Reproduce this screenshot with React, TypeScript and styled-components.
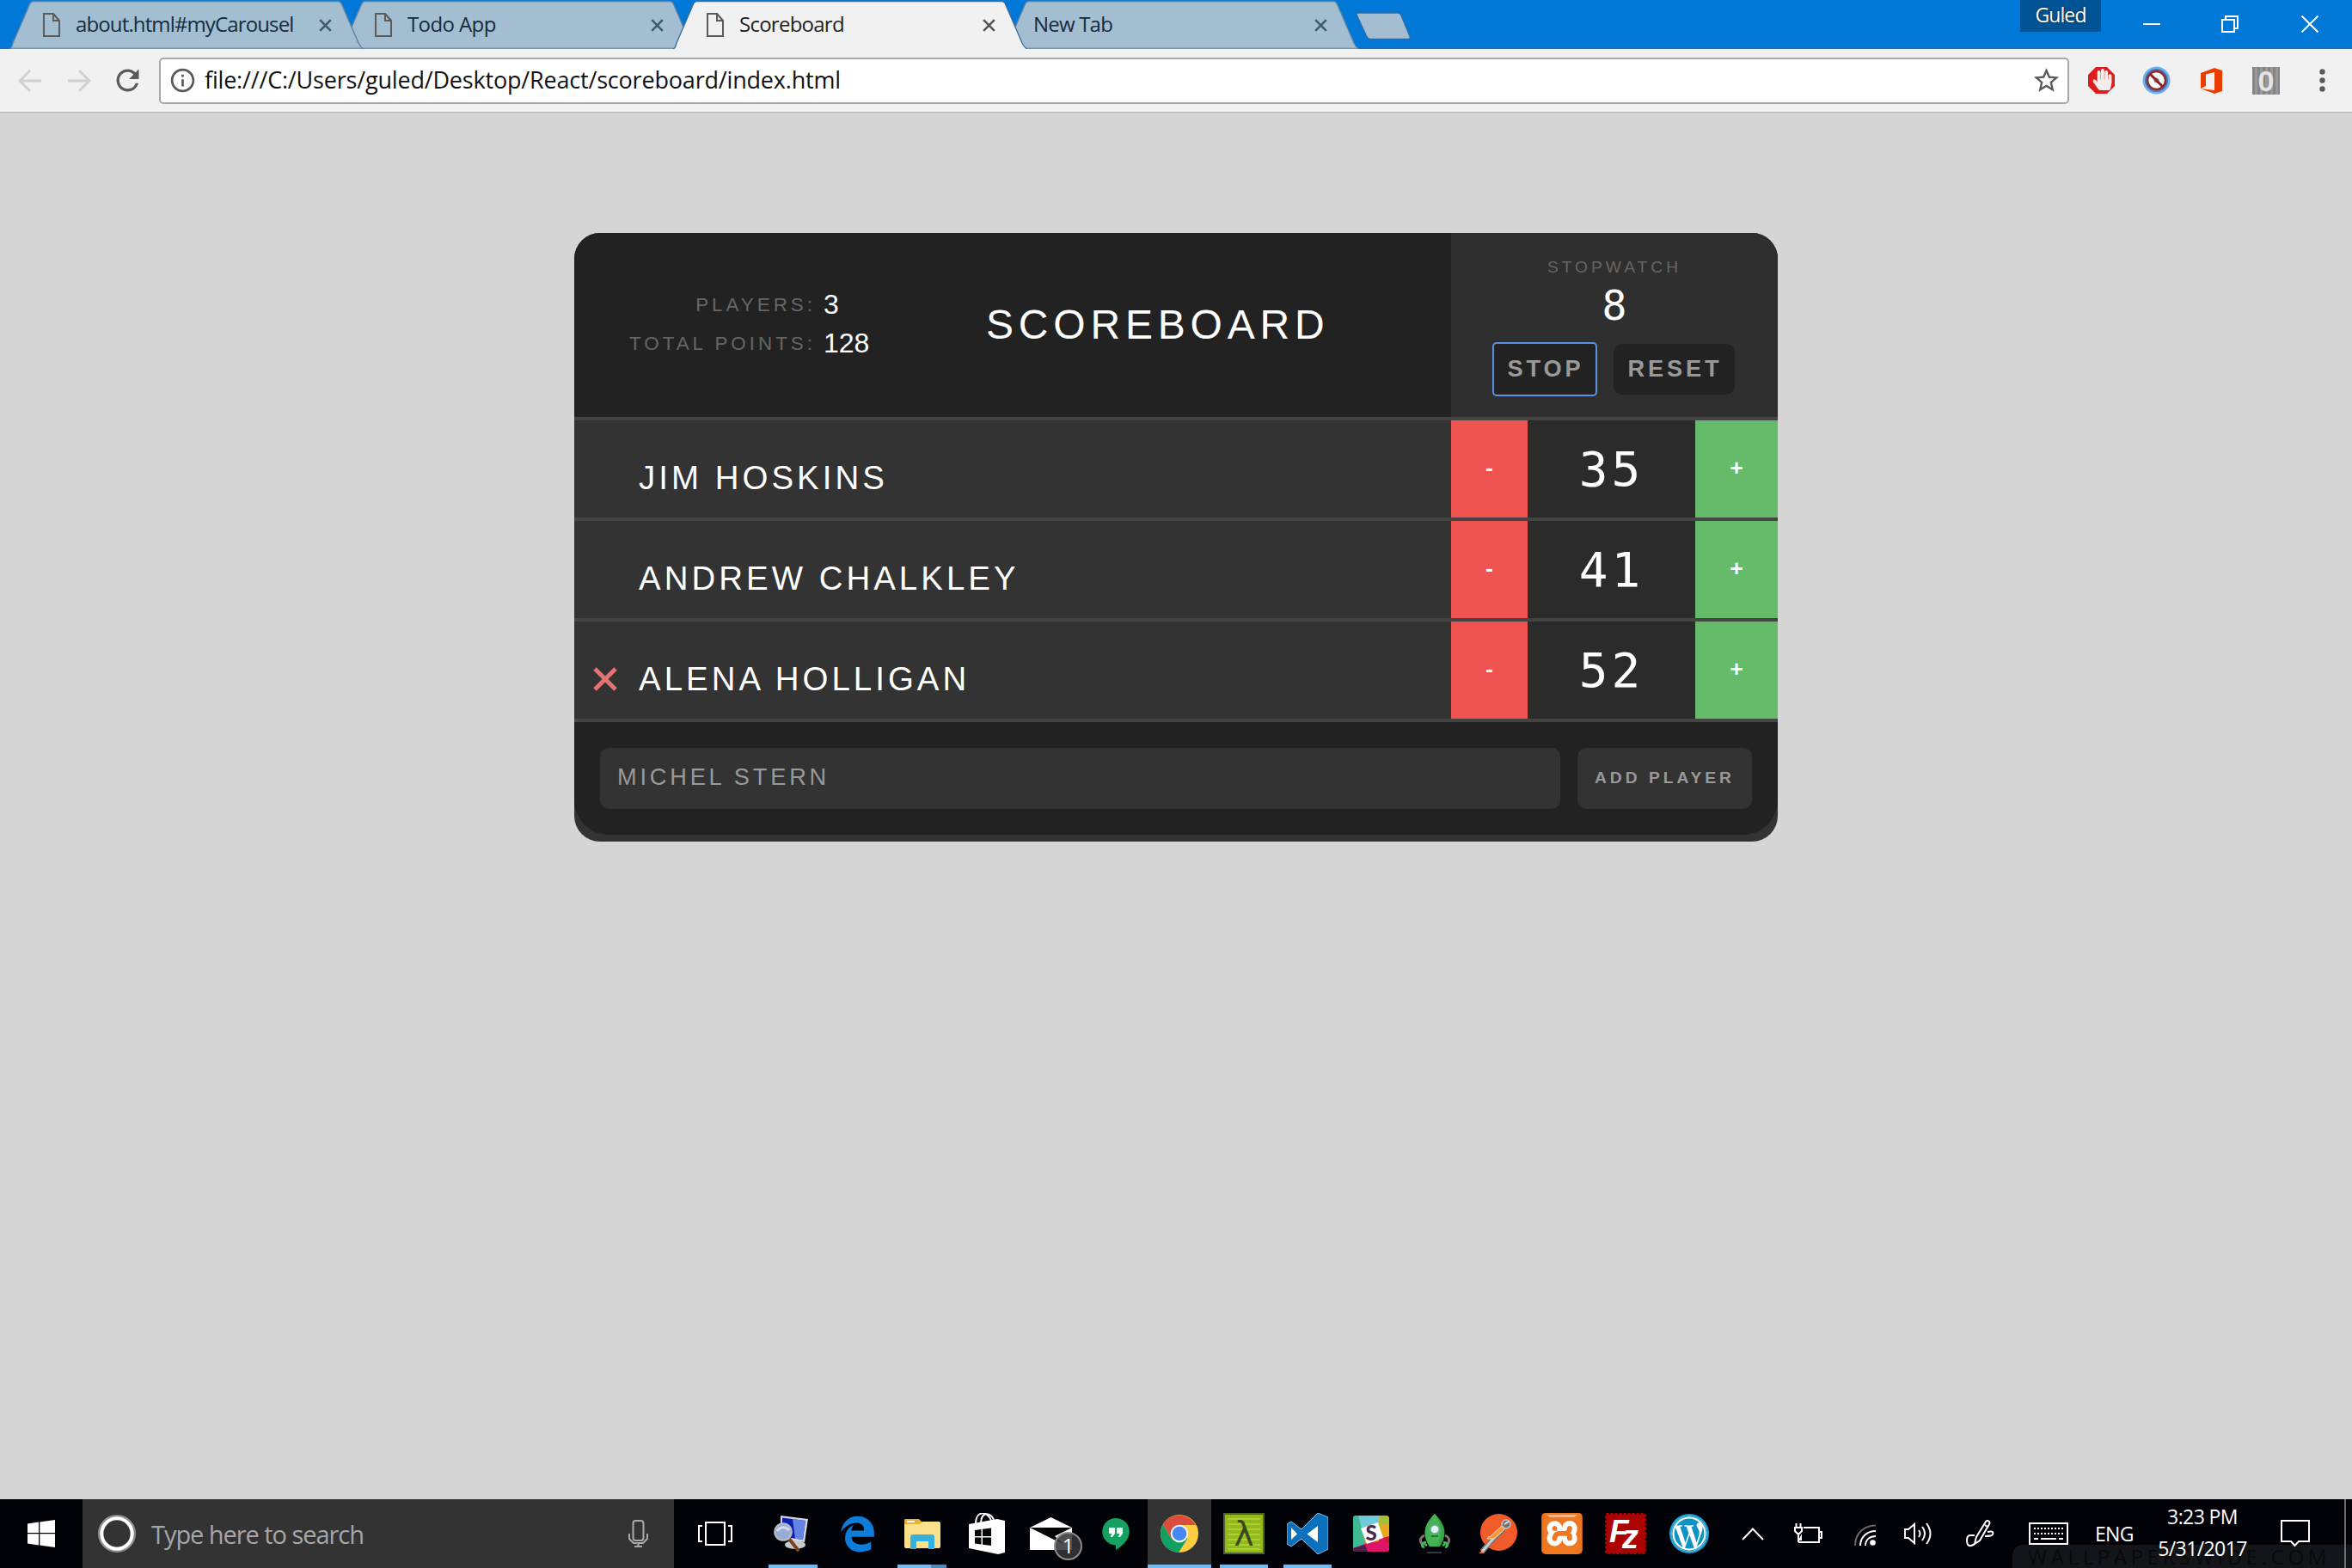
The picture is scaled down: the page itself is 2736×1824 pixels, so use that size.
import React from 'react';
import styled, { createGlobalStyle, css } from 'styled-components';
import { FaEdgeLegacy } from 'react-icons/fa6';
import { FaWordpress, FaHandPaper } from 'react-icons/fa';
import { SiXampp } from 'react-icons/si';
import { MdStarBorder, MdRefresh, MdInfoOutline } from 'react-icons/md';

const ui = `"Open Sans", "Noto Sans", sans-serif`;
const arial = `"Liberation Sans", Arial, sans-serif`;
const mono = `"DejaVu Sans Mono", monospace`;

const GlobalStyle = createGlobalStyle`
  *, *::before, *::after { box-sizing: border-box; }
  body { margin: 0; background: #d5d5d5; overflow: hidden; }
  svg { display: block; flex: none; }
  button, input { border: 0; margin: 0; padding: 0; outline: 0; }
`;

const Screen = styled.div`
  width: 2736px;
  height: 1824px;
  display: flex;
  flex-direction: column;
  background: #d5d5d5;
`;

/* ---------- browser frame ---------- */

const TitleBar = styled.header`
  height: 57px;
  display: flex;
  align-items: flex-start;
  justify-content: space-between;
  background: #0078d7;
  border-bottom: 1px solid #35679a;
`;

const TabStrip = styled.div`
  display: flex;
  padding-left: 11px;
  height: 57px;
`;

const TabItem = styled.div<{ $z: number; $ink: string; $noIcon?: boolean }>`
  position: relative;
  z-index: ${p => p.$z};
  width: 412px;
  height: 57px;
  margin-right: -26px;
  padding: 0 37px 0 ${p => (p.$noIcon ? 33 : 39)}px;
  display: flex;
  align-items: center;
  color: ${p => p.$ink};
`;

const TabShape = styled.svg`
  position: absolute;
  left: 0;
  top: 0;
`;

const TabContent = styled.div`
  position: relative;
  flex: 1;
  display: flex;
  align-items: center;
  margin-top: 1px;
`;

const TabTitle = styled.span<{ $ls: number; $gap: number }>`
  flex: 1;
  margin-left: ${p => p.$gap}px;
  font: 24px/30px ${ui};
  letter-spacing: ${p => p.$ls}px;
  white-space: nowrap;
  margin-top: -3px;
`;

const NewTabShape = styled.svg`
  margin: 14px 0 0 22px;
`;

const WindowControls = styled.div`
  display: flex;
  align-items: flex-start;
`;

const Profile = styled.div`
  width: 94px;
  height: 37px;
  display: flex;
  align-items: center;
  justify-content: center;
  padding-bottom: 3px;
  background: #005496;
  color: #fff;
  font: 23px/30px ${ui};
  letter-spacing: -0.9px;
  text-shadow: 0 0 3px #222;
`;

const WindowButton = styled.div<{ $w: number; $inset?: number }>`
  width: ${p => p.$w}px;
  height: 55px;
  display: flex;
  align-items: center;
  justify-content: center;
  padding-left: ${p => p.$inset ?? 0}px;
`;

const Toolbar = styled.div`
  height: 74px;
  display: flex;
  align-items: center;
  background: #f1f1f1;
  border-bottom: 1px solid #b4b4b4;
  padding: 0 16px 0 21px;
`;

const NavButtons = styled.div`
  display: flex;
  align-items: center;
  gap: 29px;
  width: 164px;
  color: #d0d0d0;
`;

const ReloadButton = styled.div`
  margin-left: -6px;
`;

const Omnibox = styled.div`
  width: 2222px;
  height: 54px;
  display: flex;
  align-items: center;
  background: #fff;
  border: 2px solid #a8a8a8;
  border-radius: 5px;
  padding: 0 7px 0 9px;
  color: #5a5a5a;
`;

const Url = styled.span`
  flex: 1;
  margin-left: 9px;
  padding-bottom: 1px;
  font: 27px/40px ${ui};
  letter-spacing: -0.19px;
  color: #111;
  white-space: nowrap;
`;

const Extensions = styled.div`
  display: flex;
  align-items: center;
  margin-left: 22px;
  gap: 32px;
`;

const ExtensionSlot = styled.div`
  margin-left: 3px;
`;

const BinaryIcon = styled.div`
  width: 32px;
  height: 32px;
  margin: 0 14px 0 3px;
  display: flex;
  align-items: center;
  justify-content: center;
  background: repeating-linear-gradient(90deg, #858585 0 3px, #999 3px 6px);
  color: #e4e4e4;
  font: bold 34px/32px ${arial};
`;

/* ---------- scoreboard ---------- */

const Page = styled.main`
  flex: 1;
  padding-top: 140px;
`;

const Board = styled.section`
  width: 1400px;
  height: 708px;
  margin: 0 auto;
  border-radius: 30px;
  overflow: hidden;
  background: #333;
  font-family: ${arial};
  color: #fff;
`;

const BoardHeader = styled.div`
  height: 218px;
  display: flex;
  background: #222;
  border-bottom: 4px solid #444;
`;

const Stats = styled.div`
  width: 438px;
  display: grid;
  grid-template-columns: 281px 1fr;
  grid-auto-rows: 45px;
  align-content: center;
  column-gap: 9px;
  padding-bottom: 3px;
`;

const StatLabel = styled.span`
  text-align: right;
  font-size: 22.4px;
  line-height: 45px;
  letter-spacing: 4px;
  color: #666;
`;

const StatValue = styled.span`
  font-size: 32px;
  line-height: 45px;
`;

const Title = styled.h1`
  flex: 1;
  margin: 0;
  padding-left: 41px;
  font-size: 48px;
  font-weight: 400;
  line-height: 213px;
  letter-spacing: 5.8px;
`;

const StopwatchPanel = styled.div`
  width: 380px;
  display: flex;
  flex-direction: column;
  align-items: center;
  background: #2f2f2f;
`;

const StopwatchLabel = styled.div`
  margin-top: 28px;
  font-size: 19.2px;
  line-height: 24px;
  letter-spacing: 4px;
  color: #666;
`;

const StopwatchTime = styled.div`
  margin-top: 4px;
  font: 48px/56px ${mono};
`;

const StopwatchButtons = styled.div`
  display: flex;
  gap: 21px;
  margin-top: 17px;
`;

const ActionButton = styled.button<{ $w: number; $focus?: boolean }>`
  width: ${p => p.$w}px;
  height: 59px;
  padding: 0 0 2px 2px;
  border-radius: 10px;
  background: #222;
  color: #999;
  font: bold 27.2px/57px ${arial};
  letter-spacing: 3.9px;
  ${p => p.$focus && css`
    border-radius: 3px;
    box-shadow: 0 0 0 2px #5a92e6;
  `}
`;

const PlayerRow = styled.div`
  height: 117px;
  display: flex;
  border-bottom: 4px solid #444;
`;

const PlayerName = styled.div`
  flex: 1;
  display: flex;
  align-items: center;
  padding: 21px 0 0 22px;
  font-size: 38.4px;
  line-height: 48px;
  letter-spacing: 4.05px;
`;

const RemoveSlot = styled.span`
  width: 53px;
  height: 28px;
`;

const StepButton = styled.button<{ $w: number; $bg: string }>`
  width: ${p => p.$w}px;
  padding-bottom: 3px;
  background: ${p => p.$bg};
  color: #fff;
  font: bold 26.67px/110px ${arial};
`;

const Score = styled.div`
  width: 195px;
  background: #2b2b2b;
  text-align: center;
  font: 56px/113px ${mono};
  letter-spacing: 4px;
`;

const AddForm = styled.div`
  height: 131px;
  display: flex;
  gap: 20px;
  padding: 30px;
  background: #222;
  border-radius: 0 0 40px 40px;
`;

const NameInput = styled.input`
  width: 1117px;
  height: 71px;
  padding: 0 0 3px 20px;
  border-radius: 10px;
  background: #333;
  color: #999;
  font: 27.2px/68px ${arial};
  letter-spacing: 3.8px;
`;

const AddButton = styled.button`
  width: 203px;
  height: 71px;
  padding-bottom: 2px;
  border-radius: 10px;
  background: #333;
  color: #999;
  font: bold 19.2px/69px ${arial};
  letter-spacing: 4px;
`;

/* ---------- taskbar ---------- */

const Taskbar = styled.footer`
  position: relative;
  height: 80px;
  display: flex;
  background: #010207;
  color: #fff;
`;

const Watermark = styled.div`
  position: absolute;
  right: 0;
  top: 53px;
  width: 395px;
  height: 27px;
  padding: 1px 0 0 18px;
  border-top-left-radius: 12px;
  background: #141519;
  color: #08090c;
  font: 24px/26px ${ui};
  letter-spacing: 4.6px;
  white-space: nowrap;
`;

const StartButton = styled.div`
  width: 96px;
  display: flex;
  align-items: center;
  justify-content: center;
`;

const SearchBox = styled.div`
  width: 688px;
  display: flex;
  align-items: center;
  padding: 0 30px 0 18px;
  background: #333;
`;

const SearchText = styled.span`
  flex: 1;
  margin-left: 18px;
  padding-top: 1px;
  font: 29px/40px ${ui};
  letter-spacing: -1.05px;
  color: #a6a6a6;
`;

const TaskView = styled.div`
  width: 101px;
  display: flex;
  align-items: center;
  padding-left: 28px;
`;

const AppButton = styled.div<{ $w: number; $nudge?: number; $active?: boolean }>`
  position: relative;
  flex: none;
  width: ${p => p.$w}px;
  padding-right: ${p => p.$nudge ?? 0}px;
  display: flex;
  align-items: center;
  justify-content: center;
  background: ${p => (p.$active ? '#333' : 'transparent')};
`;

const RunMark = styled.i<{ $w: number; $stack?: boolean }>`
  position: absolute;
  bottom: 0;
  left: calc(50% - ${p => p.$w / 2}px);
  width: ${p => p.$w}px;
  height: 4px;
  background: ${p => (p.$stack ? 'linear-gradient(90deg, #76b9ed 68%, #5688b2 68%)' : '#76b9ed')};
`;

const Badge = styled.span`
  position: absolute;
  left: 41px;
  top: 38px;
  width: 33px;
  height: 33px;
  border: 2px solid #8c8c8c;
  border-radius: 50%;
  background: rgba(55, 55, 58, 0.88);
  font: 24px/28px ${ui};
  text-align: center;
`;

const Tray = styled.div`
  position: relative;
  flex: 1;
  display: flex;
  align-items: center;
  padding-left: 24px;
`;

const TrayItem = styled.div<{ $w: number; $dy?: number }>`
  flex: none;
  width: ${p => p.$w}px;
  padding-top: ${p => (p.$dy ?? 0)}px;
`;

const Language = styled.div`
  flex: none;
  width: 61px;
  font: 23px/30px ${ui};
  letter-spacing: -0.7px;
`;

const Clock = styled.div`
  flex: none;
  width: 128px;
  margin-right: 27px;
  padding-bottom: 2px;
  font: 23px/37px ${ui};
  letter-spacing: -0.6px;
  text-align: center;
  white-space: nowrap;
`;

const ShowDesktop = styled.div`
  width: 9px;
  height: 80px;
  margin-left: auto;
  border-left: 2px solid #6b6b6e;
`;

/* ---------- drawings ---------- */

const FileIcon = () => (
  <svg width="20" height="28" viewBox="0 0 20 28" fill="none" stroke="#5b5b5b" strokeWidth="2">
    <path d="M1 1H12L19 9V27H1Z" />
    <path d="M12 1V9H19" />
  </svg>
);

const CloseIcon = ({ color = '#555' }: { color?: string }) => (
  <svg width="15" height="15" viewBox="0 0 15 15" stroke={color} strokeWidth="2.6">
    <path d="M1.2 1.2L13.8 13.8M13.8 1.2L1.2 13.8" />
  </svg>
);

type TabProps = { title: string; active?: boolean; icon?: boolean; z: number; ls: number };

const Tab = ({ title, active, icon = true, z, ls }: TabProps) => (
  <TabItem $z={z} $ink={active ? '#222' : '#142c40'} $noIcon={!icon}>
    <TabShape width="412" height="57" viewBox="0 0 412 57">
      <path
        d="M0 57C3 56 3 53 4 50L23 6C24 3 25 1.5 28 1.5H382C385 1.5 386 3 387 6L406 50C408 54 409 56 412 57Z"
        fill={active ? '#f1f1f1' : '#a3bdd1'}
      />
      <path
        d="M0 57C3 56 3 53 4 50L23 6C24 3 25 1.5 28 1.5H382C385 1.5 386 3 387 6L406 50C408 54 409 56 412 57"
        fill="none"
        stroke={active ? '#42709c' : '#5c83a3'}
        strokeWidth="1.4"
      />
      {!active && <path d="M2 56.3H410" stroke="#7d95a8" strokeWidth="1.5" />}
    </TabShape>
    <TabContent>
      {icon && <FileIcon />}
      <TabTitle $ls={ls} $gap={icon ? 18 : 0}>{title}</TabTitle>
      <CloseIcon color={active ? '#555' : '#44596b'} />
    </TabContent>
  </TabItem>
);

const ArrowIcon = ({ flip }: { flip?: boolean }) => (
  <svg width="28" height="28" viewBox="0 0 28 28" fill="none" stroke="currentColor" strokeWidth="3">
    <path d={flip ? 'M1 14H25M14 2L26 14L14 26' : 'M27 14H3M14 2L2 14L14 26'} />
  </svg>
);

const AdBlockIcon = () => (
  <svg width="31" height="31" viewBox="0 0 31 31">
    <path d="M9 0H22L31 9V22L22 31H9L0 22V9Z" fill="#dd1c1c" />
    <g transform="translate(4 2)"><FaHandPaper size={25} color="#f3ece8" /></g>
  </svg>
);

const BlockerIcon = () => (
  <svg width="33" height="33" viewBox="0 0 33 33">
    <circle cx="16.5" cy="16.5" r="16" fill="#6fb0ee" />
    <circle cx="16.5" cy="16.5" r="13.5" fill="#4b78b8" />
    <circle cx="16.5" cy="16.5" r="10.5" fill="#fff" stroke="#8d2c35" strokeWidth="2.6" />
    <circle cx="16.5" cy="16.5" r="3" fill="#888" />
    <path d="M9 9L24 24" stroke="#8d2028" strokeWidth="3" />
  </svg>
);

const OfficeIcon = () => (
  <svg width="25" height="30" viewBox="0 0 25 30">
    <path d="M0 6L16 0L25 3V27L16 30L0 24L16 26V5L6 7.5V21L0 24Z" fill="#eb3c00" />
  </svg>
);

const StartIcon = () => (
  <svg width="32" height="32" viewBox="0 0 32 32" fill="#fff">
    <path d="M0 4.5L13 2.6V15H0ZM14.3 2.4L32 0V15H14.3ZM0 16.3H13V29.4L0 27.5ZM14.3 16.3H32V32L14.3 29.6Z" />
  </svg>
);

const CortanaIcon = () => (
  <svg width="44" height="44" viewBox="0 0 44 44" fill="none">
    <circle cx="22" cy="22" r="20.7" stroke="#8c8c8c" strokeWidth="2.6" />
    <circle cx="22" cy="22" r="17.7" stroke="#fff" strokeWidth="4" />
  </svg>
);

const MicIcon = () => (
  <svg width="23" height="32" viewBox="0 0 23 32" fill="none" stroke="#a9a9a9" strokeWidth="2">
    <rect x="5.5" y="1" width="12" height="23" rx="3" />
    <path d="M1 16V22L6 27H17L22 22V16M11.5 27V31M7 31H16" />
  </svg>
);

const TaskViewIcon = () => (
  <svg width="40" height="28" viewBox="0 0 40 28" fill="none" stroke="#fff" strokeWidth="2">
    <path d="M9 1H31V27H9ZM5 5H1V23H5M35 5H39V23H35" />
  </svg>
);

const RemoteSearchIcon = () => (
  <svg width="40" height="42" viewBox="0 0 40 42">
    <ellipse cx="25" cy="34" rx="12" ry="5" fill="#c9c9c9" />
    <path d="M8 0L40 4L36 31L8 27Z" fill="#d5d7db" />
    <path d="M10 2.5L37 6L34 28L10 24.5Z" fill="#0d1fb0" />
    <path d="M22 4L37 6L34 28L25 27Z" fill="#6783e3" />
    <path d="M18 27L28 40" stroke="#7a4322" strokeWidth="4" strokeLinecap="round" />
    <circle cx="11" cy="19" r="9.7" fill="#97abd4" stroke="#b8bbc3" strokeWidth="2.2" />
    <path d="M4 18C8 12 14 13 18 17" stroke="#d1dbf1" strokeWidth="3" fill="none" />
  </svg>
);

const FolderIcon = () => (
  <svg width="42" height="36" viewBox="0 0 42 36">
    <path d="M0 2Q0 1 1 1H17L21 5V10H0Z" fill="#e8b13c" />
    <path d="M0 7H18L21 4H40Q42 4 42 6V33Q42 35 40 35H2Q0 35 0 33Z" fill="#fce18c" />
    <path d="M3 3H12V5H3Z" fill="#fff" />
    <path d="M7 36V22Q7 19 10 19H32Q35 19 35 22V36H28V27H14V36Z" fill="#34b1e1" />
  </svg>
);

const StoreIcon = () => (
  <svg width="42" height="48" viewBox="0 0 42 48">
    <path d="M8 12C8 -3 22 -3 26 9M14 11C15 -3 26 0 29 8" fill="none" stroke="#fff" strokeWidth="2" />
    <path d="M0 13L33 7L42 9V46L34 48L0 41Z" fill="#fff" />
    <path d="M7 20L14.5 19V27H7ZM16 18.7L26 17.5V27H16ZM7 28.5H14.5V36.5L7 35.4ZM16 28.5H26V38L16 36.7Z" fill="#05060a" />
  </svg>
);

const MailIcon = () => (
  <svg width="49" height="38" viewBox="0 0 49 38">
    <path d="M0 12L24.5 0L49 12V38H0Z" fill="#fff" />
    <path d="M0 12H49L29 22L40 32Z" fill="#05060a" />
  </svg>
);

const HangoutsIcon = () => (
  <svg width="32" height="37" viewBox="0 0 32 37">
    <path d="M16 0A15.7 15.7 0 0 1 31.7 15.7C31.7 25 24 32 16 37V31.4A15.7 15.7 0 0 1 16 0Z" fill="#16a061" />
    <path d="M8 11H15V18L12 22H9.5L11.5 18H8ZM17 11H24V18L21 22H18.5L20.5 18H17Z" fill="#f1f8f4" />
  </svg>
);

const ChromeIcon = () => (
  <svg width="44" height="44" viewBox="0 0 44 44">
    <circle cx="22" cy="22" r="22" fill="#ffcd40" />
    <path d="M22 22L12.5 27.5L3 11A22 22 0 0 0 21 44L31.5 27.5Z" fill="#11a05f" />
    <path d="M3 11A22 22 0 0 1 41 12H22L12.5 27.5Z" fill="#dd4b3e" />
    <circle cx="22" cy="22" r="10.3" fill="#f1f1f1" />
    <circle cx="22" cy="22" r="8.3" fill="#4587f3" />
  </svg>
);

const CmderIcon = () => (
  <svg width="48" height="48" viewBox="0 0 48 48">
    <rect x="1" y="1" width="46" height="46" fill="#92b91e" stroke="#53602c" strokeWidth="2" />
    <path d="M5 7H43M5 13H43M5 19H43M5 25H43M5 31H43M5 37H43M5 42H43" stroke="#b4d739" strokeWidth="1.5" />
    <text x="24" y="38" textAnchor="middle" fontFamily="DejaVu Sans, sans-serif" fontSize="39" fill="#3b4a1c">λ</text>
  </svg>
);

const CodeIcon = () => (
  <svg width="48" height="48" viewBox="0 0 48 48">
    <path d="M36 0L48 5V42L36 48L17 30L5 39L0 36V13L5 10L17 19Z" fill="#0b71bd" stroke="#8cbfe4" strokeWidth="1" />
    <path d="M5 17L12 24.5L5 31ZM36 15L23.5 24.5L36 34Z" fill="#fff" />
  </svg>
);

const SlackIcon = () => (
  <svg width="42" height="42" viewBox="0 0 42 42">
    <clipPath id="slackTile"><rect width="42" height="42" rx="4" /></clipPath>
    <g clipPath="url(#slackTile)">
      <rect width="42" height="42" fill="#e9a820" />
      <path d="M0 0H31L29 8L9 15L0 17Z" fill="#70cadb" />
      <path d="M0 0H6L17 42H0Z" fill="#3eb991" />
      <path d="M31 0H42V9L30 12Z" fill="#a5bf38" />
      <path d="M30 27L42 24V42H28Z" fill="#e01765" />
      <path d="M0 38L16 32L42 28V42H0Z" fill="#df1569" />
      <path d="M0 38L14 34L17 42H0Z" fill="#472249" />
      <path d="M37 26L42 25V32L39 32Z" fill="#d5192c" />
      <path d="M9 15L29 8L35 26L16 33Z" fill="#fff" />
    </g>
    <text x="21" y="29" textAnchor="middle" fontFamily="Lato, sans-serif" fontWeight="900" fontSize="24" fill="#492a49">S</text>
  </svg>
);

const RobotIcon = () => (
  <svg width="36" height="46" viewBox="0 0 36 46">
    <path d="M6 25C0 28 0 33 5 37M30 25C36 28 36 33 31 37" fill="none" stroke="#847267" strokeWidth="3" />
    <path d="M18 0C32 14 32 25 24 38H12C4 25 4 14 18 0Z" fill="#35a545" />
    <path d="M18 0C27 14 27 25 20 38H12C4 25 4 14 18 0Z" fill="#46b254" />
    <circle cx="18" cy="18" r="5" fill="#dff1f0" stroke="#6fae9f" strokeWidth="1.5" />
    <path d="M14 26H22" stroke="#277437" strokeWidth="2" />
    <path d="M8 33C2 33 2 38 6 39M6 35L9 37M28 33C34 33 34 38 30 39M30 35L27 37" fill="none" stroke="#38c35a" strokeWidth="2.5" />
    <path d="M9 45H26" stroke="#48494d" strokeWidth="1.5" />
  </svg>
);

const PostmanIcon = () => (
  <svg width="46" height="46" viewBox="0 0 46 46">
    <circle cx="23.5" cy="21.5" r="21.5" fill="#f15a29" />
    <path d="M0 46L9 38L6 46Z" fill="#f15a29" />
    <path d="M29 18L16 30L4 44" stroke="#777" strokeWidth="6" fill="none" />
    <path d="M29 17L17 29L4 44" stroke="#d0cdc9" strokeWidth="3" fill="none" />
    <path d="M27 14L14 26L11 27L10 29L18 29L30 18Z" fill="#f79731" stroke="#f8d5b5" strokeWidth="1" />
    <circle cx="32" cy="12" r="5" fill="#737477" stroke="#c5c5c5" strokeWidth="1.5" />
    <path d="M30 12L35 9" stroke="#eee" strokeWidth="1.5" />
  </svg>
);

const XamppIcon = () => (
  <svg width="48" height="48" viewBox="0 0 48 48">
    <rect x="3" y="3" width="42" height="42" rx="4" fill="#fff" />
    <SiXampp size={48} color="#ee7722" />
    <path d="M6 2H42L38 5H10Z" fill="#f7b483" />
  </svg>
);

const FileZillaIcon = () => (
  <svg width="48" height="48" viewBox="0 0 48 48">
    <rect x="1.5" y="1.5" width="45" height="45" fill="#b30000" stroke="#b30000" strokeWidth="3" strokeDasharray="3 2" />
    <rect x="2" y="2" width="44" height="44" fill="#ad0202" />
    <text x="5" y="34" fontFamily="Liberation Sans, sans-serif" fontStyle="italic" fontWeight="700" fontSize="37" fill="#fff">F</text>
    <text x="20" y="41" fontFamily="Liberation Sans, sans-serif" fontStyle="italic" fontWeight="700" fontSize="38" fill="#fff">z</text>
  </svg>
);

const WordPressIcon = () => (
  <svg width="46" height="46" viewBox="0 0 46 46">
    <circle cx="23" cy="23" r="23" fill="#1c9fd0" />
    <circle cx="23" cy="23" r="20.5" fill="#fff" />
    <g transform="translate(2 2)"><FaWordpress size={42} color="#0f93c4" /></g>
  </svg>
);

const TrayChevron = () => (
  <svg width="26" height="15" viewBox="0 0 26 15" fill="none" stroke="#fff" strokeWidth="2"><path d="M1 14L13 1.5L25 14" /></svg>
);

const BatteryIcon = () => (
  <svg width="33" height="24" viewBox="0 0 33 24" fill="none" stroke="#fff" strokeWidth="2">
    <path d="M11 5H29V22H5M30 10H32V17H30M2.500 0V4M7.500 0V4M1 5H9V9L5 13L1 9ZM5 13V22" />
    <path d="M9 12V20H5Z" fill="#fff" stroke="none" />
  </svg>
);

const WifiIcon = () => (
  <svg width="26" height="26" viewBox="0 0 26 26" fill="none" strokeWidth="2">
    <path d="M1 25C1 11 11 1.5 25 1.5" stroke="#6a6a6d" />
    <path d="M7 25C7 15 15 8 25 8M13 25C13 18 18 14 25 14" stroke="#fff" />
    <circle cx="21.5" cy="21.5" r="3.3" fill="#fff" />
  </svg>
);

const SoundIcon = () => (
  <svg width="34" height="28" viewBox="0 0 34 28" fill="none" stroke="#fff" strokeWidth="2">
    <path d="M1 9H5L12 3V25L5 19H1ZM17 10Q20 14 17 18M21 6Q27 14 21 22M26 2Q35 14 26 26" />
  </svg>
);

const PenIcon = () => (
  <svg width="33" height="32" viewBox="0 0 33 32" fill="none" stroke="#fff" strokeWidth="2">
    <path d="M10 28L12 20L23 2Q25 0 27 2Q28 3 27 5L16 24ZM22 6L26 9M10 18H5Q1 18 1 24Q1 31 6 30Q9 29 10 28M25 14Q33 12 31 17Q30 19 22 19" />
  </svg>
);

const KeyboardIcon = () => (
  <svg width="46" height="26" viewBox="0 0 46 26" fill="none" stroke="#fff" strokeWidth="2">
    <rect x="1" y="1" width="44" height="24" />
    <path d="M6 7H40M6 13H40" strokeDasharray="2 2" />
    <path d="M6 19H11M14 19H32M35 19H40" />
  </svg>
);

const NotificationIcon = () => (
  <svg width="34" height="32" viewBox="0 0 34 32" fill="none" stroke="#fff" strokeWidth="2">
    <path d="M1 1H33V25H21L16.500 30L12 25H1Z" />
  </svg>
);

/* ---------- data ---------- */

const players = [
  { name: 'JIM HOSKINS', score: 35 },
  { name: 'ANDREW CHALKLEY', score: 41 },
  { name: 'ALENA HOLLIGAN', score: 52, removable: true },
];

type AppEntry = {
  icon: React.ReactNode;
  w: number;
  mark?: number;
  stack?: boolean;
  active?: boolean;
  badge?: string;
  nudge?: number;
};

const apps: AppEntry[] = [
  { w: 75, icon: <RemoteSearchIcon />, mark: 57, nudge: 6 },
  { w: 75, icon: <FaEdgeLegacy size={43} color="#0d7ddb" /> },
  { w: 75, icon: <FolderIcon />, mark: 57, stack: true },
  { w: 75, icon: <StoreIcon /> },
  { w: 75, icon: <MailIcon />, badge: '1' },
  { w: 75, icon: <HangoutsIcon /> },
  { w: 74, icon: <ChromeIcon />, mark: 74, active: true },
  { w: 75, icon: <CmderIcon />, mark: 56 },
  { w: 74, icon: <CodeIcon />, mark: 56 },
  { w: 74, icon: <SlackIcon /> },
  { w: 74, icon: <RobotIcon /> },
  { w: 74, icon: <PostmanIcon /> },
  { w: 74, icon: <XamppIcon /> },
  { w: 74, icon: <FileZillaIcon /> },
  { w: 74, icon: <WordPressIcon /> },
];

export default function App() {
  return (
    <Screen>
      <GlobalStyle />
      <TitleBar>
        <TabStrip>
          <Tab title="about.html#myCarousel" z={3} ls={-0.87} />
          <Tab title="Todo App" z={2} ls={-0.6} />
          <Tab title="Scoreboard" z={4} ls={-0.75} active />
          <Tab title="New Tab" z={1} ls={-0.8} icon={false} />
          <NewTabShape width="66" height="33" viewBox="0 0 66 33">
            <path d="M3 1H49Q52 1 53 4L63 28Q64 31.5 61 31.5H17Q14 31.5 12.5 28L1.5 4Q0 1 3 1Z" fill="#a3bdd1" stroke="#2a6da9" strokeWidth="1.5" />
          </NewTabShape>
        </TabStrip>
        <WindowControls>
          <Profile>Guled</Profile>
          <WindowButton $w={118}>
            <svg width="20" height="20" viewBox="0 0 20 20"><path d="M0 10H20" stroke="#fff" strokeWidth="2" /></svg>
          </WindowButton>
          <WindowButton $w={64}>
            <svg width="20" height="20" viewBox="0 0 20 20" fill="none" stroke="#fff" strokeWidth="2"><path d="M1 5H15V19H1ZM5 5V1H19V15H15" /></svg>
          </WindowButton>
          <WindowButton $w={110} $inset={12}>
            <svg width="20" height="20" viewBox="0 0 20 20" stroke="#fff" strokeWidth="2"><path d="M.5 .5L19.5 19.5M19.5 .5L.5 19.5" /></svg>
          </WindowButton>
        </WindowControls>
      </TitleBar>
      <Toolbar>
        <NavButtons>
          <ArrowIcon />
          <ArrowIcon flip />
          <ReloadButton><MdRefresh size={39} color="#5a5a5a" /></ReloadButton>
        </NavButtons>
        <Omnibox>
          <MdInfoOutline size={33} />
          <Url>file:///C:/Users/guled/Desktop/React/scoreboard/index.html</Url>
          <MdStarBorder size={35} />
        </Omnibox>
        <Extensions>
          <AdBlockIcon />
          <BlockerIcon />
          <ExtensionSlot><OfficeIcon /></ExtensionSlot>
          <BinaryIcon>0</BinaryIcon>
          <svg width="7" height="27" viewBox="0 0 7 27" fill="#5a5a5a">
            <circle cx="3.5" cy="3.5" r="3.2" /><circle cx="3.5" cy="13.5" r="3.2" /><circle cx="3.5" cy="23.5" r="3.2" />
          </svg>
        </Extensions>
      </Toolbar>

      <Page>
        <Board>
          <BoardHeader>
            <Stats>
              <StatLabel>PLAYERS:</StatLabel>
              <StatValue>3</StatValue>
              <StatLabel>TOTAL POINTS:</StatLabel>
              <StatValue>128</StatValue>
            </Stats>
            <Title>SCOREBOARD</Title>
            <StopwatchPanel>
              <StopwatchLabel>STOPWATCH</StopwatchLabel>
              <StopwatchTime>8</StopwatchTime>
              <StopwatchButtons>
                <ActionButton $w={118} $focus>STOP</ActionButton>
                <ActionButton $w={141}>RESET</ActionButton>
              </StopwatchButtons>
            </StopwatchPanel>
          </BoardHeader>
          {players.map(p => (
            <PlayerRow key={p.name}>
              <PlayerName>
                <RemoveSlot>
                  {p.removable && (
                    <svg width="28" height="28" viewBox="0 0 28 28" stroke="#e57373" strokeWidth="5">
                      <path d="M2 2L26 26M26 2L2 26" />
                    </svg>
                  )}
                </RemoveSlot>
                {p.name}
              </PlayerName>
              <StepButton $w={89} $bg="#ef5350">-</StepButton>
              <Score>{p.score}</Score>
              <StepButton $w={96} $bg="#66bb6a">+</StepButton>
            </PlayerRow>
          ))}
          <AddForm>
            <NameInput defaultValue="MICHEL STERN" />
            <AddButton>ADD PLAYER</AddButton>
          </AddForm>
        </Board>
      </Page>

      <Taskbar>
        <Watermark>WALLPAPERSWIDE.COM</Watermark>
        <StartButton><StartIcon /></StartButton>
        <SearchBox>
          <CortanaIcon />
          <SearchText>Type here to search</SearchText>
          <MicIcon />
        </SearchBox>
        <TaskView><TaskViewIcon /></TaskView>
        {apps.map((a, i) => (
          <AppButton key={i} $w={a.w} $nudge={a.nudge} $active={a.active}>
            {a.icon}
            {a.badge && <Badge>{a.badge}</Badge>}
            {a.mark && <RunMark $w={a.mark} $stack={a.stack} />}
          </AppButton>
        ))}
        <Tray>
          <TrayItem $w={61}><TrayChevron /></TrayItem>
          <TrayItem $w={70}><BatteryIcon /></TrayItem>
          <TrayItem $w={58} $dy={4}><WifiIcon /></TrayItem>
          <TrayItem $w={72}><SoundIcon /></TrayItem>
          <TrayItem $w={73}><PenIcon /></TrayItem>
          <TrayItem $w={77}><KeyboardIcon /></TrayItem>
          <Language>ENG</Language>
          <Clock>3:23 PM<br />5/31/2017</Clock>
          <TrayItem $w={60}><NotificationIcon /></TrayItem>
          <ShowDesktop />
        </Tray>
      </Taskbar>
    </Screen>
  );
}
